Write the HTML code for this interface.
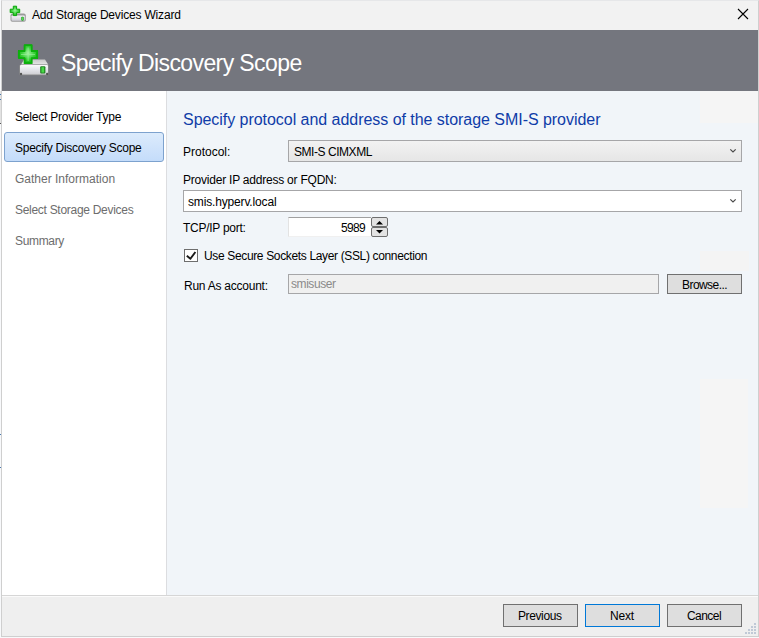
<!DOCTYPE html>
<html><head><meta charset="utf-8">
<style>
*{margin:0;padding:0;box-sizing:border-box}
html,body{width:759px;height:638px;overflow:hidden;background:#f8f9fb}
body{position:relative;font-family:"Liberation Sans",sans-serif;font-size:12px;color:#000}
.a{position:absolute;white-space:nowrap}
.t{position:absolute;white-space:nowrap;line-height:1;font-size:12px}
#win{position:absolute;left:1px;top:0;width:758px;height:637px;border:1px solid #cfcfcf;border-top-color:#e6e7e9;background:#efefef}
#title{position:absolute;left:2px;top:1px;width:756px;height:29px;background:#f2f2f2}
#hdr{position:absolute;left:2px;top:30px;width:756px;height:61px;background:#74767e}
#side{position:absolute;left:2px;top:91px;width:164px;height:504px;background:#fff}
#sideb{position:absolute;left:166px;top:91px;width:1px;height:504px;background:#dcdde0}
#cont{position:absolute;left:167px;top:91px;width:591px;height:504px;background:#f1f5f9}
#div1{position:absolute;left:2px;top:595px;width:756px;height:1px;background:#d6d6d6}
#div2{position:absolute;left:2px;top:596px;width:756px;height:1px;background:#fafafa}
#foot{position:absolute;left:2px;top:597px;width:756px;height:39px;background:#efefef}
.sel{position:absolute;left:4px;top:132px;width:160px;height:30px;border:1px solid #7da2ce;border-radius:3px;background:linear-gradient(#dcebfc,#c4dcfa)}
.box{position:absolute;border:1px solid #a6a6a8}
.btn{position:absolute;border:1px solid #707070;background:#dedede;height:23px;width:75px}
</style></head><body>
<div id="win"></div>
<div id="title"></div>
<div id="hdr"></div>
<div id="side"></div>
<div id="sideb"></div>
<div id="cont"></div>
<div id="div1"></div>
<div id="div2"></div>
<div id="foot"></div>

<!-- ghost rects -->
<div class="a" style="left:700px;top:91px;width:58px;height:32px;background:#f5f5f5"></div>
<div class="a" style="left:700px;top:251px;width:49px;height:20px;background:#f4f4f4"></div>
<div class="a" style="left:700px;top:379px;width:48px;height:129px;background:#f5f5f5"></div>
<div class="a" style="left:0;top:91px;width:1px;height:32px;background:#e2e2e2"></div>
<div class="a" style="left:0;top:94px;width:1px;height:1px;background:#4a7ab0"></div>
<div class="a" style="left:0;top:99px;width:1px;height:1px;background:#4a7ab0"></div>
<div class="a" style="left:0;top:123px;width:1px;height:1px;background:#555"></div>
<div class="a" style="left:0;top:434px;width:1px;height:1px;background:#4a7ab0"></div>
<div class="a" style="left:0;top:467px;width:1px;height:1px;background:#4a7ab0"></div>
<!-- titlebar icon -->
<svg class="a" style="left:8px;top:4px" width="20" height="20" viewBox="0 0 20 20">
  <defs>
    <linearGradient id="tg1" x1="0" y1="0" x2="0" y2="1"><stop offset="0" stop-color="#f4f4f8"/><stop offset="1" stop-color="#d0d0d8"/></linearGradient>
    <radialGradient id="tgp" cx="0.5" cy="0.45" r="0.6"><stop offset="0" stop-color="#9cf09c"/><stop offset="0.6" stop-color="#3ad23a"/><stop offset="1" stop-color="#10b010"/></radialGradient>
  </defs>
  <path d="M2.5 11.5 Q2.5 9.5 4.5 9.5 H15.8 Q17.8 9.5 17.8 11.5 V16 Q17.8 17.8 16 17.8 H4.3 Q2.5 17.8 2.5 16 Z" fill="#9a9a9a"/>
  <rect x="3.5" y="11.4" width="13.3" height="5.3" rx="0.8" fill="url(#tg1)"/>
  <rect x="13.3" y="12.7" width="2.4" height="4" rx="0.8" fill="#1f9a1f"/>
  <rect x="14" y="13.3" width="1.1" height="2.8" fill="#50e050"/>
  <path d="M5.3 2.2 H8.6 V5.2 H11.7 V8.6 H8.6 V11.6 H5.3 V8.6 H2.2 V5.2 H5.3 Z" fill="url(#tgp)" stroke="#0aa80a" stroke-width="1" stroke-linejoin="round"/>
</svg>
<div class="t" id="ttl" style="letter-spacing:-0.18px;left:32px;top:9px">Add Storage Devices Wizard</div>
<svg class="a" style="left:737px;top:8px" width="12" height="12" viewBox="0 0 12 12">
  <path d="M1 1L11 11M11 1L1 11" stroke="#000" stroke-width="1.1"/>
</svg>

<!-- header icon -->
<svg class="a" style="left:16px;top:42px" width="36" height="36" viewBox="0 0 36 36">
  <defs>
    <linearGradient id="hg1" x1="0" y1="0" x2="0" y2="1"><stop offset="0" stop-color="#fafafa"/><stop offset="0.5" stop-color="#e4e4ea"/><stop offset="1" stop-color="#cfcfd4"/></linearGradient>
    <linearGradient id="hg2" x1="0" y1="0" x2="0" y2="1"><stop offset="0" stop-color="#c8c8c8"/><stop offset="1" stop-color="#e8e8e8"/></linearGradient>
    <filter id="hblur" x="-10%" y="-10%" width="120%" height="120%"><feGaussianBlur stdDeviation="0.35"/></filter><radialGradient id="hgp" cx="0.5" cy="0.45" r="0.6"><stop offset="0" stop-color="#a0f0a0"/><stop offset="0.55" stop-color="#3cd03c"/><stop offset="1" stop-color="#0cb40c"/></radialGradient>
  </defs>
  <path d="M5 22.8 L8 17.6 H29 L32.3 22.8 Z" fill="url(#hg2)"/>
  <rect x="3.3" y="22.6" width="29.4" height="10.6" rx="1.5" fill="#8c8c8c"/>
  <rect x="4" y="23" width="28" height="9.4" rx="1" fill="url(#hg1)"/>
  <rect x="24.2" y="24.2" width="5.2" height="7.4" rx="1" fill="#1f7f1f"/>
  <rect x="25.4" y="25.2" width="2.8" height="5.4" fill="#46d846"/>
  <circle cx="5" cy="32" r="1.2" fill="#555"/><circle cx="31.2" cy="32" r="1.2" fill="#555"/>
  <g filter="url(#hblur)"><path d="M8.6 3.2 H15.7 V9 H21.2 V16.1 H15.7 V21.2 H8.6 V16.1 H2.8 V9 H8.6 Z" fill="url(#hgp)" stroke="#08b008" stroke-width="1.8" stroke-linejoin="round"/><path d="M12.1 5.5 V19 M5 12.5 H19" stroke="#9ef29e" stroke-width="1.2" opacity="0.6"/></g>
</svg>
<div class="t" id="htxt" style="letter-spacing:-0.6px;left:61px;top:52px;font-size:23px;color:#fff">Specify Discovery Scope</div>

<!-- sidebar -->
<div class="sel"></div>
<div class="t" id="s1" style="letter-spacing:-0.22px;left:15px;top:111px">Select Provider Type</div>
<div class="t" id="s2" style="letter-spacing:-0.27px;left:15px;top:142px">Specify Discovery Scope</div>
<div class="t" id="s3" style="left:15px;top:173px;color:#6d6d6d">Gather Information</div>
<div class="t" id="s4" style="letter-spacing:-0.29px;left:15px;top:204px;color:#6d6d6d">Select Storage Devices</div>
<div class="t" id="s5" style="letter-spacing:-0.33px;left:15px;top:235px;color:#6d6d6d">Summary</div>

<!-- content -->
<div class="t" id="c0" style="letter-spacing:-0.04px;left:183px;top:112px;font-size:16px;color:#0f3ca8">Specify protocol and address of the storage SMI-S provider</div>
<div class="t" id="c1" style="left:183px;top:146px">Protocol:</div>
<div class="box" style="left:288px;top:140px;width:454px;height:22px;background:linear-gradient(#f2f2f2,#e6e6e6)"></div>
<div class="t" id="c1v" style="letter-spacing:-0.45px;left:294px;top:146px">SMI-S CIMXML</div>
<svg class="a" style="left:729px;top:147px" width="8" height="7" viewBox="0 0 8 7"><path d="M1.3 2.3l2.7 2.7 2.7-2.7" fill="none" stroke="#4a4a4a" stroke-width="1.2"/></svg>

<div class="t" id="c2" style="letter-spacing:-0.22px;left:183px;top:174px">Provider IP address or FQDN:</div>
<div class="box" style="left:183px;top:190px;width:559px;height:22px;background:#fff"></div>
<div class="t" id="c2v" style="letter-spacing:-0.16px;left:188px;top:196px">smis.hyperv.local</div>
<svg class="a" style="left:729px;top:197px" width="8" height="7" viewBox="0 0 8 7"><path d="M1.3 2.3l2.7 2.7 2.7-2.7" fill="none" stroke="#4a4a4a" stroke-width="1.2"/></svg>

<div class="t" id="c3" style="letter-spacing:-0.27px;left:183px;top:222px">TCP/IP port:</div>
<div class="a" style="left:288px;top:217px;width:83px;height:20px;background:#fff;border-top:1px solid #a0a0a0;border-left:1px solid #e3e3e3;border-bottom:1px solid #f0f0f0"></div>
<div class="t" id="c3v" style="letter-spacing:-0.67px;left:341px;top:222px">5989</div>
<div class="a" style="left:371px;top:217px;width:17px;height:10px;border:1px solid #6e6e6e;border-radius:2px;background:#e3e3e3"></div>
<div class="a" style="left:371px;top:227px;width:17px;height:10px;border:1px solid #6e6e6e;border-radius:2px;background:#e3e3e3"></div>
<svg class="a" style="left:375px;top:220px" width="9" height="14" viewBox="0 0 9 14"><path d="M1 4.5L4.5 1 8 4.5z" fill="#000"/><path d="M1 10L4.5 13.5 8 10z" fill="#000"/></svg>

<div class="a" style="left:184px;top:249px;width:14px;height:13px;border:1px solid #6e6e6e;background:#fff"></div>
<svg class="a" style="left:184px;top:249px" width="14" height="13" viewBox="0 0 14 13"><path d="M2.8 6.8L6.4 9.8L11.4 3" fill="none" stroke="#1a1a1a" stroke-width="1.9" stroke-linejoin="round"/></svg>
<div class="t" id="c4" style="letter-spacing:-0.35px;left:204px;top:250px">Use Secure Sockets Layer (SSL) connection</div>

<div class="t" id="c5" style="letter-spacing:-0.24px;left:184px;top:280px">Run As account:</div>
<div class="box" style="left:288px;top:274px;width:371px;height:20px;background:#f0f0f0"></div>
<div class="t" id="c5v" style="letter-spacing:-0.43px;left:291px;top:278px;color:#8a8a8a">smisuser</div>
<div class="btn" style="left:667px;top:274px;height:20px"></div>
<div class="t" id="c6" style="letter-spacing:-0.56px;left:682px;top:279px">Browse...</div>

<!-- footer buttons -->
<div class="btn" style="left:503px;top:604px"></div>
<div class="t" id="b1" style="letter-spacing:-0.39px;left:518px;top:610px">Previous</div>
<div class="btn" style="left:585px;top:604px;border-color:#0078d7"></div>
<div class="t" id="b2" style="letter-spacing:-0.23px;left:610px;top:610px">Next</div>
<div class="btn" style="left:667px;top:604px"></div>
<div class="t" id="b3" style="letter-spacing:-0.56px;left:687px;top:610px">Cancel</div>

<!-- size grip -->
<svg class="a" style="left:744px;top:622px" width="14" height="13" viewBox="0 0 14 13">
  <g fill="#c0c9d6">
    <rect x="10" y="1" width="2" height="2"/>
    <rect x="7" y="4" width="2" height="2"/><rect x="10" y="4" width="2" height="2"/>
    <rect x="4" y="7" width="2" height="2"/><rect x="7" y="7" width="2" height="2"/><rect x="10" y="7" width="2" height="2"/>
    <rect x="1" y="10" width="2" height="2"/><rect x="4" y="10" width="2" height="2"/><rect x="7" y="10" width="2" height="2"/><rect x="10" y="10" width="2" height="2"/>
  </g>
</svg>
</body></html>
